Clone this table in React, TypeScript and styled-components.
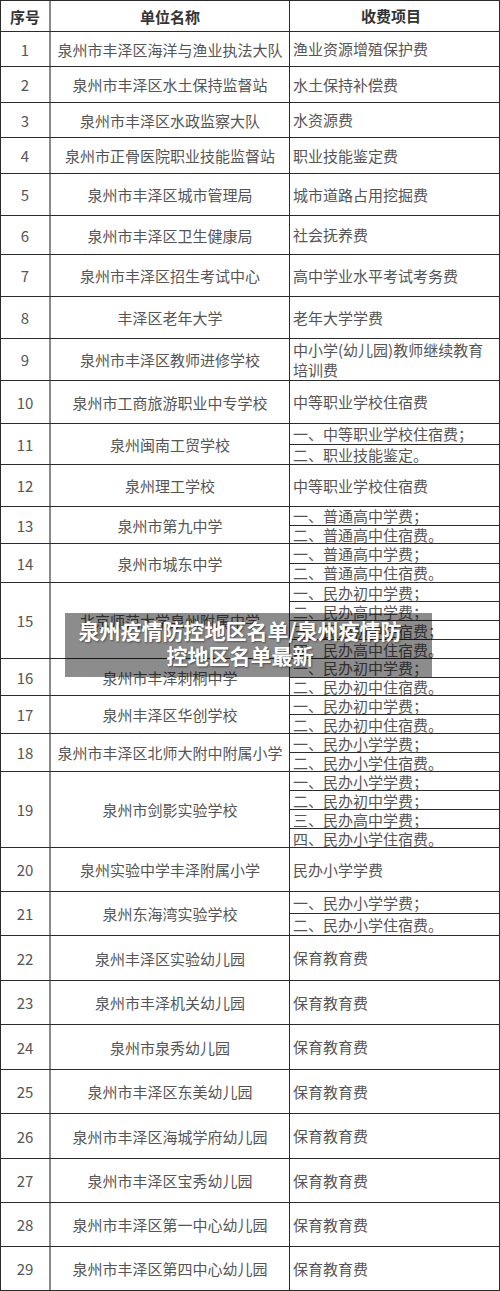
import React from 'react';
import styled, { createGlobalStyle } from 'styled-components';

const GlobalStyle = createGlobalStyle`
    html, body {
        margin: 0;
        padding: 0;
        background: #fff;
    }
    body {
        font-family: "Noto Sans CJK SC", "Noto Sans", sans-serif;
    }
`;

interface IEntry {
    no: number;
    name: string;
    fees: string[];
    height: number;
}

const entries: IEntry[] = [
    { no: 1, name: '泉州市丰泽区海洋与渔业执法大队', fees: ['渔业资源增殖保护费'], height: 35 },
    { no: 2, name: '泉州市丰泽区水土保持监督站', fees: ['水土保持补偿费'], height: 36 },
    { no: 3, name: '泉州市丰泽区水政监察大队', fees: ['水资源费'], height: 35 },
    { no: 4, name: '泉州市正骨医院职业技能监督站', fees: ['职业技能鉴定费'], height: 36 },
    { no: 5, name: '泉州市丰泽区城市管理局', fees: ['城市道路占用挖掘费'], height: 42 },
    { no: 6, name: '泉州市丰泽区卫生健康局', fees: ['社会抚养费'], height: 39 },
    { no: 7, name: '泉州市丰泽区招生考试中心', fees: ['高中学业水平考试考务费'], height: 42 },
    { no: 8, name: '丰泽区老年大学', fees: ['老年大学学费'], height: 42 },
    { no: 9, name: '泉州市丰泽区教师进修学校', fees: ['中小学(幼儿园)教师继续教育培训费'], height: 42 },
    { no: 10, name: '泉州市工商旅游职业中专学校', fees: ['中等职业学校住宿费'], height: 43 },
    { no: 11, name: '泉州闽南工贸学校', fees: ['一、中等职业学校住宿费；', '二、职业技能鉴定。'], height: 41 },
    { no: 12, name: '泉州理工学校', fees: ['中等职业学校住宿费'], height: 42 },
    { no: 13, name: '泉州市第九中学', fees: ['一、普通高中学费；', '二、普通高中住宿费。'], height: 37 },
    { no: 14, name: '泉州市城东中学', fees: ['一、普通高中学费；', '二、普通高中住宿费。'], height: 39 },
    {
        no: 15,
        name: '北京师范大学泉州附属中学',
        fees: ['一、民办初中学费；', '二、民办高中学费；', '三、民办初中住宿费；', '四、民办高中住宿费。'],
        height: 76,
    },
    { no: 16, name: '泉州市丰泽刺桐中学', fees: ['一、民办初中学费；', '二、民办初中住宿费。'], height: 37 },
    { no: 17, name: '泉州丰泽区华创学校', fees: ['一、民办初中学费；', '二、民办初中住宿费。'], height: 38 },
    { no: 18, name: '泉州市丰泽区北师大附中附属小学', fees: ['一、民办小学学费；', '二、民办小学住宿费。'], height: 38 },
    {
        no: 19,
        name: '泉州市剑影实验学校',
        fees: ['一、民办小学学费；', '二、民办初中学费；', '三、民办高中学费；', '四、民办小学住宿费。'],
        height: 76,
    },
    { no: 20, name: '泉州实验中学丰泽附属小学', fees: ['民办小学学费'], height: 44 },
    { no: 21, name: '泉州东海湾实验学校', fees: ['一、民办小学学费；', '二、民办小学住宿费。'], height: 44 },
    { no: 22, name: '泉州丰泽区实验幼儿园', fees: ['保育教育费'], height: 45 },
    { no: 23, name: '泉州市丰泽机关幼儿园', fees: ['保育教育费'], height: 44 },
    { no: 24, name: '泉州市泉秀幼儿园', fees: ['保育教育费'], height: 45 },
    { no: 25, name: '泉州市丰泽区东美幼儿园', fees: ['保育教育费'], height: 44 },
    { no: 26, name: '泉州市丰泽区海城学府幼儿园', fees: ['保育教育费'], height: 45 },
    { no: 27, name: '泉州市丰泽区宝秀幼儿园', fees: ['保育教育费'], height: 44 },
    { no: 28, name: '泉州市丰泽区第一中心幼儿园', fees: ['保育教育费'], height: 44 },
    { no: 29, name: '泉州市丰泽区第四中心幼儿园', fees: ['保育教育费'], height: 44 },
];

const Page = styled.div`
    position: relative;
    width: 500px;
`;

const Table = styled.div`
    width: 500px;
    box-sizing: border-box;
    border-top: 1px solid #2b2b2b;
    border-left: 1px solid #2b2b2b;
    border-right: 1px solid #2b2b2b;
`;

const Row = styled.div<{ $height: number }>`
    display: grid;
    grid-template-columns: 50px 239px 1fr;
    height: ${(p) => p.$height}px;
    box-sizing: border-box;
    border-bottom: 1px solid #2b2b2b;
`;

const NoCell = styled.div<{ $head?: boolean }>`
    display: flex;
    align-items: center;
    justify-content: center;
    box-sizing: border-box;
    border-right: 2px solid #8a8a8a;
    font-size: 15px;
    color: ${(p) => (p.$head ? '#333' : '#555')};
    font-weight: ${(p) => (p.$head ? 700 : 400)};
`;

const NameCell = styled.div<{ $head?: boolean }>`
    display: flex;
    align-items: center;
    justify-content: center;
    box-sizing: border-box;
    border-right: 1px solid #2b2b2b;
    font-size: 15px;
    white-space: nowrap;
    color: ${(p) => (p.$head ? '#333' : '#555')};
    font-weight: ${(p) => (p.$head ? 700 : 400)};
`;

const FeeCell = styled.div<{ $head?: boolean }>`
    display: flex;
    align-items: center;
    justify-content: ${(p) => (p.$head ? 'center' : 'flex-start')};
    box-sizing: border-box;
    padding: 0 10px 0 3px;
    font-size: 15px;
    line-height: 20px;
    color: ${(p) => (p.$head ? '#333' : '#555')};
    font-weight: ${(p) => (p.$head ? 700 : 400)};
`;

const FeeList = styled.div`
    display: flex;
    flex-direction: column;
`;

const FeeLine = styled.div`
    flex: 1;
    display: flex;
    align-items: center;
    padding-left: 3px;
    font-size: 15px;
    line-height: 17px;
    color: #555;
    white-space: nowrap;
    border-bottom: 1px solid #2b2b2b;

    &:last-child {
        border-bottom: none;
    }
`;

const Banner = styled.div`
    position: absolute;
    left: 65px;
    top: 613px;
    width: 367px;
    height: 64px;
    box-sizing: border-box;
    padding: 5px 27px 0 10px;
    background: rgba(0, 0, 0, 0.45);
    color: #fff;
    font-size: 21px;
    line-height: 25px;
    font-weight: 700;
    text-align: center;
    text-shadow: 1px 1px 2px rgba(0, 0, 0, 0.45);
`;

export default function App() {
    return (
        <Page>
            <GlobalStyle />
            <Table>
                <Row $height={31}>
                    <NoCell $head>序号</NoCell>
                    <NameCell $head>单位名称</NameCell>
                    <FeeCell $head>收费项目</FeeCell>
                </Row>
                {entries.map((e) => (
                    <Row key={e.no} $height={e.height}>
                        <NoCell>{e.no}</NoCell>
                        <NameCell>{e.name}</NameCell>
                        {e.fees.length > 1 ? (
                            <FeeList>
                                {e.fees.map((f) => (
                                    <FeeLine key={f}>{f}</FeeLine>
                                ))}
                            </FeeList>
                        ) : (
                            <FeeCell>{e.fees[0]}</FeeCell>
                        )}
                    </Row>
                ))}
            </Table>
            <Banner>泉州疫情防控地区名单/泉州疫情防控地区名单最新</Banner>
        </Page>
    );
}
